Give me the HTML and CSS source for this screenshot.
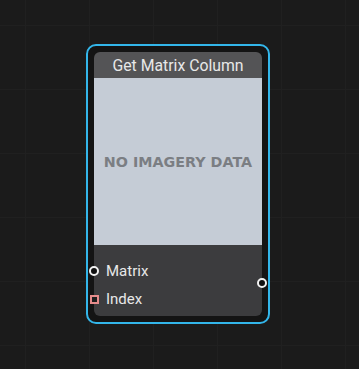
FILE: index.html
```html
<!DOCTYPE html>
<html>
<head>
<meta charset="utf-8">
<link rel="stylesheet" href="styles.css">
</head>
<body>
<div class="canvas">
  <div class="frame">
    <div class="node">
      <div class="header">Get Matrix Column</div>
      <div class="preview">NO IMAGERY DATA</div>
      <div class="ports">
        <div class="row"><span class="sock circle"></span><span class="label">Matrix</span></div>
        <div class="row"><span class="sock square"></span><span class="label">Index</span></div>
        <span class="sock circle out"></span>
      </div>
    </div>
  </div>
</div>
</body>
</html>
```
FILE: styles.css
```css
html, body {
  margin: 0;
  padding: 0;
}
body {
  width: 359px;
  height: 369px;
  overflow: hidden;
  background-color: #1b1b1b;
  background-image:
    linear-gradient(to right, #202020 1px, transparent 1px),
    linear-gradient(to bottom, #202020 1px, transparent 1px);
  background-size: 64px 64px;
  background-position: 25px 25px;
  font-family: Roboto, "Liberation Sans", sans-serif;
}
.canvas {
  padding: 44px 0 0 86px;
}
.frame {
  width: 168px;
  padding: 6px;
  border: 2px solid #33b6ea;
  border-radius: 10px;
  background: #141414;
}
.node {
  display: flex;
  flex-direction: column;
}
.header {
  height: 26px;
  line-height: 28px;
  background: #545456;
  color: #e8e8e8;
  font-size: 15.8px;
  text-align: center;
  border-radius: 6px 6px 0 0;
}
.preview {
  height: 167px;
  background: #c5ccd6;
  color: #7b7e83;
  display: flex;
  align-items: center;
  justify-content: center;
  font-family: "DejaVu Sans", sans-serif;
  font-weight: bold;
  font-size: 14.3px;
}
.ports {
  position: relative;
  height: 71px;
  padding-top: 12px;
  box-sizing: border-box;
  background: #3c3c3e;
  border-radius: 0 0 6px 6px;
}
.row {
  height: 28px;
  display: flex;
  align-items: center;
}
.label {
  color: #e8e8e8;
  font-size: 15px;
  margin-left: 7px;
}
.sock {
  box-sizing: border-box;
  margin-left: -4px;
  flex: none;
}
.circle {
  width: 10px;
  height: 10px;
  border: 2px solid #f2f2f2;
  border-radius: 50%;
  background: #111;
  margin-left: -5px;
}
.square {
  width: 9px;
  height: 9px;
  border: 2px solid #e68c8c;
  background: #1e1e1e;
}
.out {
  position: absolute;
  right: -5px;
  top: 33px;
  margin: 0;
}
```
